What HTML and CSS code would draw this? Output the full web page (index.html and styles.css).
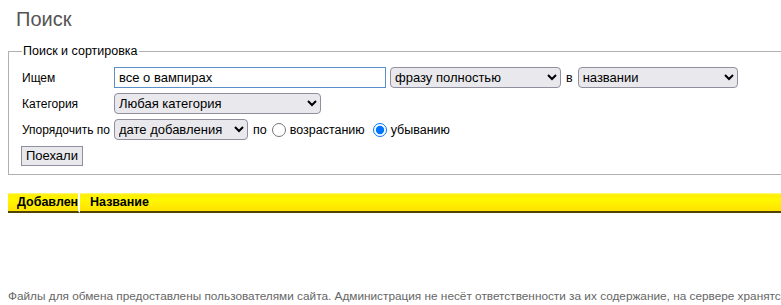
FILE: index.html
```html
<!DOCTYPE html>
<html lang="ru">
<head>
    <meta charset="UTF-8">
    <title>Поиск</title>
    <link rel="stylesheet" href="styles.css">
</head>
<body>
    <div class="page">
        <h1>Поиск</h1>

        <form class="search-form">
            <fieldset>
                <legend>Поиск и сортировка</legend>
                <div class="row">
                    <span class="label">Ищем</span>
                    <input type="text" class="query" value="все о вампирах">
                    <select class="sel-mode">
                        <option>фразу полностью</option>
                    </select>
                    <span class="word">в</span>
                    <select class="sel-where">
                        <option>названии</option>
                    </select>
                </div>
                <div class="row">
                    <span class="label">Категория</span>
                    <select class="sel-cat">
                        <option>Любая категория</option>
                    </select>
                </div>
                <div class="row">
                    <span class="label">Упорядочить по</span>
                    <select class="sel-sort">
                        <option>дате добавления</option>
                    </select>
                    <span class="word">по</span>
                    <label class="radio"><input type="radio" name="dir"> возрастанию</label>
                    <label class="radio"><input type="radio" name="dir" checked> убыванию</label>
                </div>
                <div class="row">
                    <button type="button" class="go">Поехали</button>
                </div>
            </fieldset>
        </form>

        <table class="results">
            <thead>
                <tr>
                    <th class="col-date">Добавлен</th>
                    <th class="col-name">Название</th>
                </tr>
            </thead>
        </table>

        <div class="footer">
            Файлы для обмена предоставлены пользователями сайта. Администрация не несёт ответственности за их содержание, на сервере хранятся только ссылки.
        </div>
    </div>
</body>
</html>
```

FILE: styles.css
```css
body {
    margin: 0;
    padding: 0 8px;
    font-family: 'Liberation Sans', Arial, sans-serif;
    font-size: 12.5px;
    color: #000;
    background: #fff;
    overflow: hidden;
}
.page {
    width: 1000px;
}
h1 {
    margin: 0;
    padding: 8px 0 0 8px;
    height: 30px;
    font-size: 20px;
    font-weight: normal;
    color: #555;
}
.search-form {
    margin: 0;
}
fieldset {
    margin: 6px 0 0 0;
    padding: 9px 12px 8px 13px;
    border: 1px solid #b0b0b0;
    border-right: none;
}
legend {
    padding: 0 1px;
    font-size: 12.5px;
}
.row {
    display: flex;
    align-items: center;
    height: 21px;
    margin-bottom: 5px;
    white-space: nowrap;
}
.row:last-child {
    margin-bottom: 0;
}
.label {
    width: 92px;
    flex: none;
    font-size: 12px;
}
.word {
    margin: 0 5px;
}
input.query {
    width: 272px;
    height: 21px;
    box-sizing: border-box;
    margin: 0 4px 0 0;
    padding: 1px 4px;
    border: 1px solid #5b8fc9;
    font-family: inherit;
    font-size: 13px;
}
select {
    height: 21px;
    box-sizing: border-box;
    margin: 0;
    font-family: inherit;
    font-size: 13px;
    border: 1px solid #8f8f9d;
    border-radius: 4px;
    background-color: #e9e9ed;
}
.sel-mode { width: 171px; }
.sel-where { width: 160px; }
.sel-cat { width: 207px; }
.sel-sort { width: 134px; }
.radio {
    display: flex;
    align-items: center;
    margin-right: 8px;
}
.radio input {
    margin: 0 4px 0 0;
    width: 14px;
    height: 14px;
}
.go {
    height: 20px;
    padding: 0 4px;
    margin-left: -1px;
    font-family: inherit;
    font-size: 13px;
    border: 1px solid #8f8f9d;
    border-radius: 0;
    background: #e9e9ed;
}
.results {
    margin-top: 18px;
    width: 100%;
    table-layout: fixed;
    border-collapse: separate;
    border-spacing: 0;
}
.results th {
    height: 20px;
    box-sizing: border-box;
    padding: 0 0 1px 10px;
    text-align: left;
    font-size: 12.5px;
    font-weight: bold;
    white-space: nowrap;
    overflow: hidden;
    background: linear-gradient(#fffa80 0, #ffee00 2px, #fff700 40%, #ffe800 80%, #ffe200 100%);
    border-bottom: 2px solid #4f4500;
}
.results th.col-date {
    width: 72px;
    padding-left: 9px;
    border-right: 2px solid #fff;
}
.footer {
    margin-top: 76px;
    white-space: nowrap;
    font-size: 11.8px;
    color: #666;
}
```
